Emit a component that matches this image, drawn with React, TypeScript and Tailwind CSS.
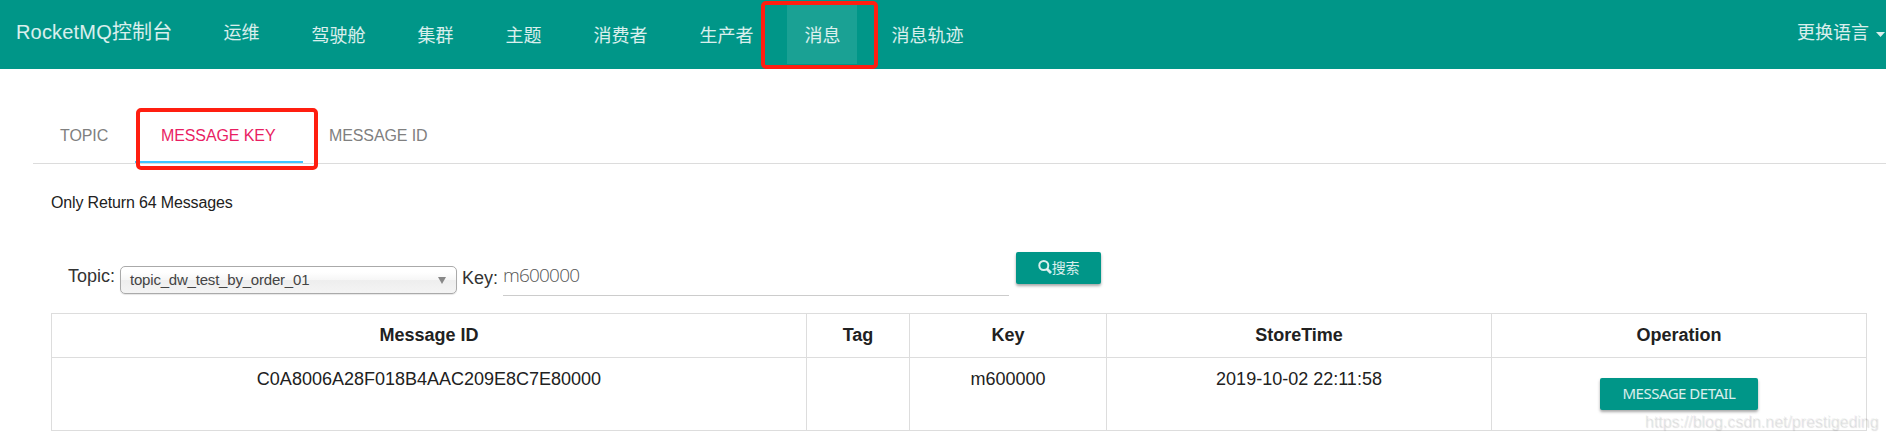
import type { ReactNode } from "react";

const navItems = [
  { label: "运维", cls: "ml-[34px] mt-[-3px]" },
  { label: "驾驶舱", cls: "ml-[18px]" },
  { label: "集群", cls: "ml-[18px]" },
  { label: "主题", cls: "ml-[18px]" },
  { label: "消费者", cls: "ml-[18px]" },
  { label: "生产者", cls: "ml-[18px]" },
  { label: "消息", cls: "ml-[17px] bg-white/10" },
  { label: "消息轨迹", cls: "ml-[17px]" },
];

function Header() {
  return (
    <header className="relative flex h-[69px] items-start bg-[#009688] pl-4 text-white/85">
      <span className="mt-[17px] text-[20px] leading-[30px] tracking-[0.18px] whitespace-nowrap">RocketMQ控制台</span>
      <nav className="flex pt-[5px]">
        {navItems.map((n) => (
          <a key={n.label} className={`h-[59px] px-[17px] text-[18px] leading-[62px] whitespace-nowrap ${n.cls}`}>
            {n.label}
          </a>
        ))}
      </nav>
      <div className="mt-[18px] ml-auto flex items-center gap-[7px] pr-[1px] text-[18px] leading-[30px]">
        更换语言
        <svg width="9" height="5" viewBox="0 0 9 5" className="mt-[2px]">
          <path d="M0 0h9L4.500 5z" fill="currentColor" />
        </svg>
      </div>
      <div className="absolute top-[1px] left-[761px] h-[68px] w-[117px] rounded-[5px] border-4 border-[#ff1e10]" />
    </header>
  );
}

function Tabs() {
  return (
    <div className="relative mt-[40px] ml-[33px] flex h-[55px] border-b border-[#dcdcdc] text-[16px] leading-[54px] tracking-[-0.1px] text-[#808080]">
      <span className="w-[102px] pl-[27px]">TOPIC</span>
      <span className="h-[54px] w-[168px] border-b-2 border-[#40c4ff] pl-[26px] text-[#e91e63]">MESSAGE KEY</span>
      <span className="pl-[26px]">MESSAGE ID</span>
      <div className="absolute top-[-1px] left-[103px] h-[62px] w-[182px] rounded-[5px] border-4 border-[#ff1e10]" />
    </div>
  );
}

function RaisedButton({ className, children }: { className: string; children: ReactNode }) {
  return (
    <button
      className={`flex h-8 items-center justify-center rounded-[2px] bg-[#009688] text-white/85 shadow-[0_2px_3px_rgba(0,0,0,0.35)] ${className}`}
    >
      {children}
    </button>
  );
}

function SearchForm() {
  return (
    <div className="flex h-[61px] items-start pl-[68px] text-[18px] text-[#333]">
      <label className="mt-[11px] w-[52px] leading-[26px]">Topic:</label>
      <div className="mt-[14px] flex h-[28px] w-[337px] items-center justify-between rounded-[5px] border border-[#aaa] bg-[linear-gradient(#fff_20%,#f6f6f6_50%,#eee_52%,#f4f4f4)] pr-[10px] pl-[9px] text-[15px] tracking-[-0.2px] text-[#444] shadow-[0_1px_1px_rgba(0,0,0,0.1)]">
        topic_dw_test_by_order_01
        <svg width="8" height="7" viewBox="0 0 8 7">
          <path d="M0 0h8L4 7z" fill="#888" />
        </svg>
      </div>
      <label className="mt-[13px] ml-[5px] w-[41px] leading-[26px]">Key:</label>
      <div className="h-[44px] w-[506px] border-b border-[#ccc] pt-[9px] font-['Open_Sans'] text-[19px] leading-[28px] font-light tracking-[-0.8px] text-[#555]">
        m600000
      </div>
      <RaisedButton className="ml-[7px] w-[85px] text-[14px]">
        <svg width="14" height="14" viewBox="0 0 14 14" className="mb-[3px]" fill="none" stroke="currentColor" strokeWidth="2">
          <circle cx="5.800" cy="5.500" r="4.500" />
          <path d="M9 9l4 4" strokeWidth="2.800" />
        </svg>
        <span className="tracking-[-0.2px]">搜索</span>
      </RaisedButton>
    </div>
  );
}

function ResultTable() {
  const th = "border border-[#ddd] p-0 font-bold";
  const td = "border border-[#ddd] p-0 pt-[8px] align-top leading-[26px]";
  return (
    <table className="ml-[51px] w-[1816px] table-fixed border-collapse text-center text-[18px] text-[#212121]">
      <colgroup>
        <col className="w-[755px]" />
        <col className="w-[103px]" />
        <col className="w-[197px]" />
        <col className="w-[385px]" />
        <col className="w-[375px]" />
      </colgroup>
      <thead>
        <tr className="h-[44px]">
          <th className={th}>Message ID</th>
          <th className={th}>Tag</th>
          <th className={th}>Key</th>
          <th className={th}>StoreTime</th>
          <th className={th}>Operation</th>
        </tr>
      </thead>
      <tbody>
        <tr className="h-[73px]">
          <td className={td}>C0A8006A28F018B4AAC209E8C7E80000</td>
          <td className={td} />
          <td className={td}>m600000</td>
          <td className={td}>2019-10-02 22:11:58</td>
          <td className="border border-[#ddd] p-0 pt-[20px] align-top">
            <RaisedButton className="mx-auto w-[158px] pb-[2px] font-['Noto_Sans'] text-[15px] tracking-[-0.5px]">
              MESSAGE DETAIL
            </RaisedButton>
          </td>
        </tr>
      </tbody>
    </table>
  );
}

export default function App() {
  return (
    <div className="relative h-[440px] overflow-hidden bg-white font-['Liberation_Sans','Noto_Sans_CJK_SC',sans-serif]">
      <Header />
      <Tabs />
      <p className="mt-[26px] mb-[36px] pl-[51px] text-[16px] leading-[26px] tracking-[-0.15px] text-[#212121]">
        Only Return 64 Messages
      </p>
      <SearchForm />
      <ResultTable />
      <span className="absolute right-[8px] bottom-[6px] text-[16px] leading-[24px] tracking-[-0.04px] text-black/5 [text-shadow:1px_1px_1px_rgba(0,0,0,0.12)]">
        https://blog.csdn.net/prestigeding
      </span>
    </div>
  );
}
